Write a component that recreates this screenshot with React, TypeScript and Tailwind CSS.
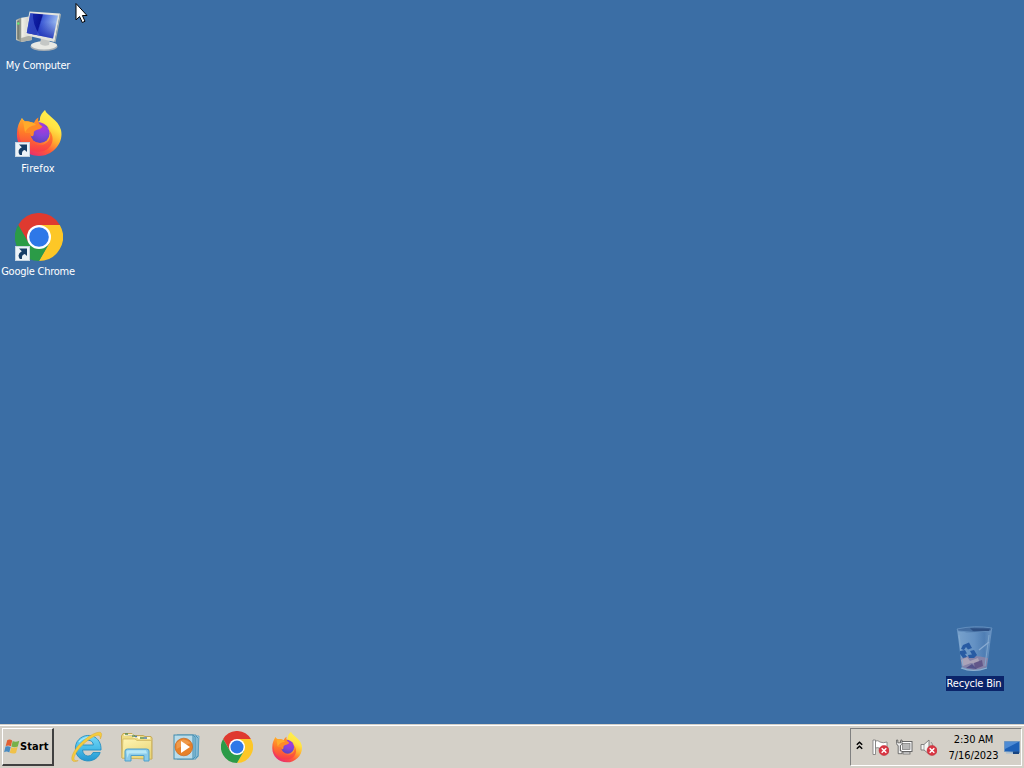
import React from "react";

type IconProps = { className?: string };

function ComputerIcon({ className }: IconProps) {
  return (
    <svg className={className} viewBox="0 0 48 48">
      <defs>
        <linearGradient id="screen" x1="0" y1="0" x2="1" y2="0.25">
          <stop offset="0" stopColor="#4567d8" />
          <stop offset="0.15" stopColor="#1426ae" />
          <stop offset="0.48" stopColor="#0a1595" />
          <stop offset="0.52" stopColor="#3e5cd6" />
          <stop offset="1" stopColor="#9cbcf0" />
        </linearGradient>
        <linearGradient id="screenShade" x1="0" y1="0" x2="0" y2="1">
          <stop offset="0.35" stopColor="#0818a8" stopOpacity="0" />
          <stop offset="1" stopColor="#0818a8" stopOpacity="0.75" />
        </linearGradient>
        <linearGradient id="tower" x1="0" y1="0" x2="1" y2="0">
          <stop offset="0" stopColor="#c9cbc3" />
          <stop offset="0.3" stopColor="#8f958c" />
          <stop offset="0.36" stopColor="#f3f2ea" />
          <stop offset="1" stopColor="#c4c3ba" />
        </linearGradient>
      </defs>
      <path d="M1 13 L5 11 L17 9 L17 33 L6 35 L1 33Z" fill="url(#tower)" />
      <path d="M2.2 14 L4.5 13 L4.5 33 L2.2 32Z" fill="#777e73" />
      <circle cx="3.3" cy="16.5" r="1.2" fill="#65e578" />
      <path d="M6 31 L17 28 L17 33 L6 35Z" fill="#aeb0a8" />
      <ellipse cx="29" cy="39.5" rx="13.5" ry="4.5" fill="#a5adb3" />
      <ellipse cx="29" cy="38.3" rx="13" ry="4.1" fill="#e8e9e4" />
      <path d="M26 31 L35 32 L34 38 Q29 40 25 37Z" fill="#c4c7c5" />
      <path d="M14.5 4.5 L45 6.5 L39.5 35 L10 28Z" fill="#e3e4de" />
      <path d="M45 6.5 L46 7.5 L40.5 35.5 L39.5 35Z" fill="#a9b0af" />
      <path d="M15.2 6.2 L43 8.4 L38 31.5 L11.8 26Z" fill="url(#screen)" />
      <path d="M15.2 6.2 L43 8.4 L38 31.5 L11.8 26Z" fill="url(#screenShade)" />
      <path d="M15.2 6.2 L18 6.4 Q17 16 25 28.7 L11.8 26Z" fill="#4865d6" opacity="0.55" />
    </svg>
  );
}

function FirefoxIcon({ className, id }: IconProps & { id: string }) {
  return (
    <svg className={className} viewBox="0 0 48 48">
      <defs>
        <linearGradient id={id + "body"} x1="0.85" y1="0.05" x2="0.3" y2="1">
          <stop offset="0" stopColor="#fff44f" />
          <stop offset="0.28" stopColor="#ffe344" />
          <stop offset="0.5" stopColor="#ffae2e" />
          <stop offset="0.72" stopColor="#ff5c38" />
          <stop offset="1" stopColor="#e82a70" />
        </linearGradient>
        <linearGradient id={id + "fox"} x1="0.5" y1="0" x2="0.4" y2="1">
          <stop offset="0" stopColor="#ffad2d" />
          <stop offset="0.45" stopColor="#ff7b28" />
          <stop offset="1" stopColor="#f9384c" />
        </linearGradient>
        <radialGradient id={id + "globe"} cx="0.65" cy="0.15" r="0.85">
          <stop offset="0" stopColor="#b635d9" />
          <stop offset="0.55" stopColor="#8146dc" />
          <stop offset="1" stopColor="#5d45be" />
        </radialGradient>
      </defs>
      <path d="M30 1 C32 7 43 10 46 21 C49 34 38 47 24 47 C11 47 1 37 2 24 C2 18 4 13 7 9 C9 13 13 13 17 15 C21 12 25 14 25 10 C25 6 28 3 30 1Z" fill={"url(#" + id + "body)"} />
      <path d="M7 9 C7 12 9 13 10 14 C13 12 16 13 20 15 L18 33 C23 39 31 36 34 31 C36 27 35 24 34 21 C41 29 37 39 29 42 C19 45 8 39 5 30 C3 23 4 15 7 9Z" fill={"url(#" + id + "fox)"} />
      <circle cx="25" cy="24.5" r="9.6" fill={"url(#" + id + "globe)"} />
      <path d="M20 14 C24 12 31 14 34 20 C32 18 29 17 26 17.5Z" fill={"url(#" + id + "globe)"} />
      <path d="M8 13 C12 11 16 13 19 14 C20 11 22 9 23.5 8.5 C22 13 25 16 27.5 17.5 C26.5 20 22 20.5 19.5 22 C18 23.5 19.5 25.5 18 27 C16 28 15 26 15 24 L10 24Z" fill="#ff8928" />
      <path d="M8 13 C12 11 16 13 19 14 L21 16 Q13 17 10 23Z" fill="#ffab2b" />
    </svg>
  );
}

function ChromeIcon({ className }: IconProps) {
  return (
    <svg className={className} viewBox="0 0 48 48">
      <path d="M3.2 12 A24 24 0 0 1 44.8 12 H24 L13.6 30Z" fill="#df3a2f" />
      <path d="M44.8 12 A24 24 0 0 1 24 48 L34.4 30 L24 12Z" fill="#fdc727" />
      <path d="M24 48 A24 24 0 0 1 3.2 12 L13.6 30 H34.4Z" fill="#2b9b47" />
      <circle cx="24" cy="24" r="12" fill="#fff" />
      <circle cx="24" cy="24" r="9.8" fill="#2e78e8" />
    </svg>
  );
}

function RecycleBinIcon({ className }: IconProps) {
  return (
    <svg className={className} viewBox="0 0 48 48">
      <defs>
        <linearGradient id="bin" x1="0" y1="0" x2="1" y2="0">
          <stop offset="0" stopColor="#79a2cc" />
          <stop offset="0.5" stopColor="#6491c3" />
          <stop offset="0.78" stopColor="#4f7eb4" />
          <stop offset="1" stopColor="#6c95c3" />
        </linearGradient>
      </defs>
      <path d="M6 4 L41 4 L36 43 Q24 49 11 43Z" fill="url(#bin)" />
      <path d="M9.5 33 Q20 29 37 33 L35.5 42 Q24 48 11 42Z" fill="#8583a8" />
      <path d="M10 35 L16 32 L19 36 L27 33 L29 39 L20 38 L12 41Z" fill="#aaa3b8" />
      <path d="M23 38 L31 35 L32 41 L24 44Z" fill="#625789" />
      <path d="M15 43 L21 39 L26 44Z" fill="#53538b" />
      <path d="M10 43 Q22 48 36 43" stroke="#91b1d0" fill="none" strokeWidth="1.2" />
      <path d="M6 4 Q24 0 41 3 L40 6 Q24 9 7 6Z" fill="#436da1" stroke="#6a95c4" strokeWidth="0.8" />
      <path d="M19 3.2 L39 3.5 L38 6 L22 6Z" fill="#2c4e82" />
      <path d="M8 10 L12 41 M38 10 L34 41" stroke="#85acd1" strokeWidth="0.8" fill="none" />
      <path d="M38 17 L28 25" stroke="#8aabd2" strokeWidth="1.3" />
      <g fill="#285ba3">
        <path d="M12 20 L18 17.5 L21 23 L17 24.5 L15 22 L13 25 L10 24Z" />
        <path d="M9 26 L14 25 L16 28.5 L14 29 L16 32 L12 33 L9 29Z" />
        <path d="M19 26 L23 25 L26 30 L23 33 L18 33 L17 30 L21 29.5Z" />
      </g>
    </svg>
  );
}

function ShortcutBadge() {
  return (
    <svg className="absolute bottom-0 left-0 size-[15px]" viewBox="0 0 15 15">
      <rect x="0.5" y="0.5" width="14" height="14" fill="#edf3f8" stroke="#c4d3e1" />
      <path d="M4 2.5 H12 V10 L9.8 8 Q6.5 8.5 7 13 H4.8 Q1.5 8 6.8 5.2Z" fill="#173e68" />
    </svg>
  );
}

function Cursor() {
  return (
    <svg className="absolute left-[75px] top-[2px] h-[22px] w-[13px]" viewBox="0 0 13 21">
      <path d="M1 1 V17.4 L4.6 14 L7.3 20 L10 18.8 L7.4 13 H12Z" fill="#fff" stroke="#000" strokeWidth="1" />
    </svg>
  );
}

function WindowsFlag() {
  return (
    <svg className="h-[16px] w-[16px] shrink-0" viewBox="0 0 16 16">
      <path d="M3.2 1.2 Q5.8 -.3 8.2 1.6 L6.9 7.2 Q4.5 5.8 1.7 7Z" fill="#e05f32" />
      <path d="M8.7 1.9 Q11.4 3.5 15.3 1.7 L13.8 7.4 Q10.5 8.9 7.4 7.5Z" fill="#77b14a" />
      <path d="M1.5 7.6 Q4.3 6.6 6.7 8 L5.3 13.5 Q2.7 11.9 .1 13.2Z" fill="#488bc1" />
      <path d="M7.2 8.2 Q10.2 9.5 13.6 8.1 L12 13.9 Q9 15.2 5.8 13.8Z" fill="#f0c149" />
    </svg>
  );
}

function ExplorerEIcon() {
  return (
    <svg className="h-[32px] w-[32px]" viewBox="0 0 32 32">
      <defs>
        <linearGradient id="ie" x1="0" y1="0" x2="0" y2="1">
          <stop offset="0" stopColor="#78d8f7" />
          <stop offset="0.5" stopColor="#49bde9" />
          <stop offset="1" stopColor="#2495cf" />
        </linearGradient>
      </defs>
      <path fillRule="evenodd" d="M30 19 H11.5 C12 26 20 27 22 21.5 H29.2 C26.8 29 17.5 32.4 10 28 C3.6 24.2 2.4 14 7.8 8.5 C16 .2 30.8 5 30 19Z M11.7 14 H22.4 C22 7.8 12.7 7.5 11.7 14Z" fill="url(#ie)" stroke="#238fc2" strokeWidth="0.9" />
      <path d="M8 11 Q13 5.6 20 6.5" stroke="#a6eafa" strokeWidth="1.3" fill="none" />
      <path d="M7.2 29.6 C1.5 32.5 -1.3 29 2.6 21.4 C7.5 12 21 1.5 28.2 1.2 C31.5 1 31 4.7 29.3 8 C29.6 4 27.5 3.2 23 5.5 C15 9.6 7.2 17.4 4.1 23.8 C1.8 28.4 3.1 30.2 7.2 29.6Z" fill="#f5cc3e" stroke="#dda92e" strokeWidth="0.5" />
    </svg>
  );
}

function FolderIcon() {
  return (
    <svg className="h-[32px] w-[34px]" viewBox="0 0 34 32">
      <defs>
        <linearGradient id="folder" x1="0" y1="0" x2="0.6" y2="1">
          <stop offset="0" stopColor="#fff5b4" />
          <stop offset="1" stopColor="#ead679" />
        </linearGradient>
      </defs>
      <path d="M2 27 L1.5 5 L3 2.5 H12 L14 4.5 H23 L25 5.5 H31 L32 7 L32 28Z" fill="#efdc83" stroke="#c5a955" />
      <path d="M4 4 H12 L14 6 H20 M18 7 H30" stroke="#fffbe1" strokeWidth="1.5" />
      <path d="M5 3 h3 M12 5 h3 M20 7 h4" stroke="#598c54" strokeWidth="1.5" />
      <path d="M15 5.5 h2 M24 7 h3" stroke="#537bac" strokeWidth="1.5" />
      <path d="M2 27 L3 8 H15 L17 9.5 H31.5 V28Z" fill="url(#folder)" stroke="#ccb25d" strokeWidth="0.7" />
      <path d="M5 30 V20 Q5.2 18 7.5 18 H26.5 Q29 18 29 20 V30 H24 V24.5 H11 V30Z" fill="#8acbea" stroke="#4f9fca" strokeWidth="1" />
      <path d="M6.3 20.5 Q7 19.2 9 19.2 H26 L27 22.5 H9 L7.5 27Z" fill="#c1edfa" opacity="0.8" />
    </svg>
  );
}

function MediaPlayerIcon() {
  return (
    <svg className="h-[28px] w-[30px]" viewBox="0 0 30 28">
      <path d="M8 3 L27 3 L26 24 L8 26Z" fill="#b9dced" stroke="#6aa9c8" />
      <path d="M5 2 L24 2 V26 H5Z" fill="#9dcde2" stroke="#599aba" />
      <rect x="2" y="2" width="19" height="24" fill="#b9dcea" stroke="#438bae" />
      <path d="M21 2 L23 4 V24 L21 26 M24 3 L26 5 V23 L24 25" stroke="#4b93b7" fill="none" />
      <circle cx="11.8" cy="14" r="8.8" fill="#e78129" stroke="#c86620" strokeWidth="0.7" />
      <path d="M4.5 10 Q11 3 19 10 Q12 12 4.5 16Z" fill="#f8b36c" opacity="0.5" />
      <path d="M9 8 L18 14 L9 20Z" fill="#fff" />
    </svg>
  );
}

function ErrorBadge() {
  return (
    <g>
      <circle cx="12" cy="11.5" r="5" fill="#d93643" stroke="#b92932" strokeWidth="0.5" />
      <path d="M9.7 9.2 L14.3 13.8 M14.3 9.2 L9.7 13.8" stroke="#fff" strokeWidth="1.5" />
    </g>
  );
}

function TrayIcon({ kind }: { kind: "flag" | "network" | "sound" }) {
  return (
    <svg className="size-[17px]" viewBox="0 0 17 17">
      {kind === "flag" && (
        <>
          <path d="M1 1 H3.5 V15.5 H1Z" fill="#fff" stroke="#777" strokeWidth="0.8" />
          <path d="M3.5 2 Q6 1 8 3 Q11 4.5 15 3 V10 Q11 11 8 9.5 Q6 8 3.5 9Z" fill="#fff" stroke="#777" strokeWidth="0.8" />
          <ErrorBadge />
        </>
      )}
      {kind === "network" && (
        <>
          <rect x="4.5" y="2.5" width="11.5" height="10" fill="#fff" stroke="#666" />
          <rect x="6.5" y="4.5" width="7.5" height="6" fill="#b8b8b8" stroke="#777" strokeWidth="0.7" />
          <rect x="7" y="13" width="7" height="2" fill="#f2f2f2" stroke="#666" strokeWidth="0.8" />
          <path d="M.6 1 V4.5 Q.6 6.3 2.2 6.5 V14.7 H6 V12 H4.3 V6.5 Q6 6 6 4.5 V1 H4.8 V3.8 H1.8 V1Z" fill="#f2f2f2" stroke="#555" strokeWidth="0.8" />
        </>
      )}
      {kind === "sound" && (
        <>
          <path d="M1 5.5 H4 L9 1 V15 L4 11 H1Z" fill="#f5f5f3" stroke="#777" strokeWidth="0.9" />
          <path d="M4 5.5 V11" stroke="#888" strokeWidth="0.7" />
          <path d="M11 3 Q13 5 12.5 7" stroke="#888" fill="none" strokeWidth="0.8" />
          <ErrorBadge />
        </>
      )}
    </svg>
  );
}

function DesktopIcon() {
  return (
    <svg className="h-[15px] w-[16px]" viewBox="0 0 16 15">
      <path d="M0.5 1.5 H15.5 V12.5 L0.5 11.5Z" fill="#1d60b7" stroke="#6c95c1" />
      <path d="M1 2 H14.5 L1 9Z" fill="#4e8bd4" />
      <path d="M9 11.5 H15 V14 H9Z" fill="#164481" />
      <path d="M2 13 H9" stroke="#9dbbd5" />
    </svg>
  );
}

export default function App() {
  return (
    <div className="flex h-[768px] w-[1024px] flex-col overflow-hidden bg-[#3b6ea5] font-['DejaVu_Sans_Condensed','DejaVu_Sans',sans-serif] text-[11px] leading-[14px] [font-stretch:condensed]">
      <main className="relative min-h-0 flex-1 text-white">
        <div className="absolute left-0 top-[7px] flex w-[76px] flex-col items-center">
          <ComputerIcon className="ml-[2px] size-[48px]" />
          <span className="mt-[4px] whitespace-nowrap tracking-[-0.22px]">My Computer</span>
        </div>
        <div className="absolute left-0 top-[109px] flex w-[76px] flex-col items-center">
          <div className="relative ml-[2px] size-[48px]">
            <FirefoxIcon id="desktop-fx" className="size-[48px]" />
            <ShortcutBadge />
          </div>
          <span className="mt-[5px] tracking-[0.1px]">Firefox</span>
        </div>
        <div className="absolute left-0 top-[213px] flex w-[76px] flex-col items-center">
          <div className="relative ml-[2px] size-[48px]">
            <ChromeIcon className="size-[48px]" />
            <ShortcutBadge />
          </div>
          <span className="mt-[4px] whitespace-nowrap tracking-[-0.25px]">Google Chrome</span>
        </div>
        <div className="absolute left-[946px] top-[625px] flex w-[58px] flex-col items-center">
          <RecycleBinIcon className="size-[48px]" />
          <span className="mt-[3px] flex h-[15px] w-[58px] items-center justify-center whitespace-nowrap bg-[#0a246a] pr-[2px] tracking-[-0.2px]">Recycle Bin</span>
        </div>
        <Cursor />
      </main>

      <footer className="flex h-[44px] shrink-0 items-start border-t border-[#d4d0c8] bg-[#d4d0c8] text-black">
        <div className="flex h-[43px] w-full items-start border-t border-white">
          <button className="ml-[2px] mt-[2px] flex h-[38px] w-[52px] items-center border-b-2 border-l border-r-2 border-t border-b-[#404040] border-l-white border-r-[#404040] border-t-white pl-[1px] font-bold">
            <WindowsFlag />
            <span className="pt-[1px] tracking-[0.1px]">Start</span>
          </button>
          <nav className="flex h-[42px] items-center pl-[17px]">
            <ExplorerEIcon />
            <div className="ml-[17px] flex"><FolderIcon /></div>
            <div className="ml-[18px] flex"><MediaPlayerIcon /></div>
            <div className="ml-[19px] flex"><ChromeIcon className="size-[32px]" /></div>
            <div className="ml-[18px] flex"><FirefoxIcon id="taskbar-fx" className="size-[32px]" /></div>
          </nav>
          <div className="ml-auto mr-[2px] mt-[2px] flex h-[38px] w-[172px] items-center border border-b-white border-l-[#808080] border-r-white border-t-[#808080]">
            <svg className="mb-[3px] ml-[5px] h-[9px] w-[7px]" viewBox="0 0 7 9">
              <path d="M0.8 3.8 L3.5 1.2 L6.2 3.8 M0.8 7.8 L3.5 5.2 L6.2 7.8" fill="none" stroke="#000" strokeWidth="1.5" />
            </svg>
            <div className="ml-[9px] flex gap-[7px] pt-[1px]">
              <TrayIcon kind="flag" />
              <TrayIcon kind="network" />
              <TrayIcon kind="sound" />
            </div>
            <div className="ml-[11px] flex w-[51px] flex-col items-center whitespace-nowrap pt-[2px] leading-[16px]">
              <span className="tracking-[-0.2px]">2:30 AM</span>
              <span className="tracking-[-0.1px]">7/16/2023</span>
            </div>
            <div className="ml-[5px]"><DesktopIcon /></div>
          </div>
        </div>
      </footer>
    </div>
  );
}
